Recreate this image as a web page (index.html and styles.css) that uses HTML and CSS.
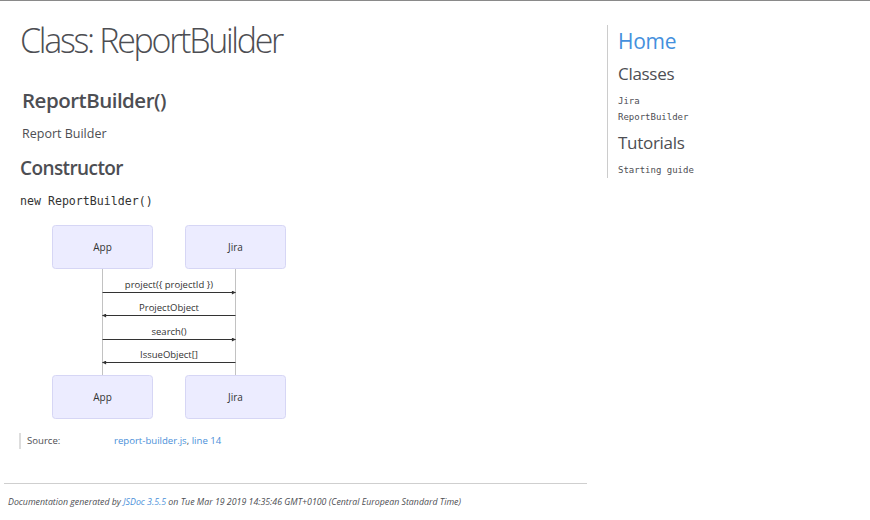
FILE: index.html
```html
<!DOCTYPE html>
<html lang="en">
<head>
<meta charset="utf-8">
<title>Class: ReportBuilder</title>
<link rel="stylesheet" href="styles.css">
</head>
<body>
<div class="page">
  <div class="main">
    <h1 class="page-title">Class: ReportBuilder</h1>
    <section class="doc">
      <h2 class="class-name">ReportBuilder()</h2>
      <p class="class-desc">Report Builder</p>
      <h3 class="subsection-title">Constructor</h3>
      <div class="signature">new ReportBuilder()</div>
      <svg class="diagram" width="260" height="200" viewBox="40 222 260 200" xmlns="http://www.w3.org/2000/svg">
        <defs>
          <marker id="arrow" viewBox="0 0 10 10" refX="9" refY="5" markerWidth="7" markerHeight="4" orient="auto" markerUnits="userSpaceOnUse">
            <path d="M0,0 L10,5 L0,10 z" fill="#333"/>
          </marker>
        </defs>
        <line x1="102.5" y1="268" x2="102.5" y2="376" stroke="#999" stroke-width="0.6"/>
        <line x1="235.5" y1="268" x2="235.5" y2="376" stroke="#999" stroke-width="0.6"/>
        <rect x="52.5" y="225.5" width="100" height="43" rx="3" fill="#ECECFF" stroke="#D6D6F5" stroke-width="1"/>
        <rect x="185.5" y="225.5" width="100" height="43" rx="3" fill="#ECECFF" stroke="#D6D6F5" stroke-width="1"/>
        <rect x="52.5" y="375.5" width="100" height="43" rx="3" fill="#ECECFF" stroke="#D6D6F5" stroke-width="1"/>
        <rect x="185.5" y="375.5" width="100" height="43" rx="3" fill="#ECECFF" stroke="#D6D6F5" stroke-width="1"/>
        <text class="actor" x="102.5" y="251" text-anchor="middle">App</text>
        <text class="actor" x="235.5" y="251" text-anchor="middle">Jira</text>
        <text class="actor" x="102.5" y="401" text-anchor="middle">App</text>
        <text class="actor" x="235.5" y="401" text-anchor="middle">Jira</text>
        <text class="msg" x="169" y="288" text-anchor="middle">project({ projectId })</text>
        <line x1="102.5" y1="292.5" x2="235.5" y2="292.5" stroke="#333" stroke-width="1" marker-end="url(#arrow)"/>
        <text class="msg" x="169" y="311" text-anchor="middle">ProjectObject</text>
        <line x1="235.5" y1="315.5" x2="102.5" y2="315.5" stroke="#333" stroke-width="1" marker-end="url(#arrow)"/>
        <text class="msg" x="169" y="335" text-anchor="middle">search()</text>
        <line x1="102.5" y1="339.5" x2="235.5" y2="339.5" stroke="#333" stroke-width="1" marker-end="url(#arrow)"/>
        <text class="msg" x="169" y="358" text-anchor="middle">IssueObject[]</text>
        <line x1="235.5" y1="362.5" x2="102.5" y2="362.5" stroke="#333" stroke-width="1" marker-end="url(#arrow)"/>
      </svg>
      <dl class="details">
        <dt class="tag-source">Source:</dt>
        <dd class="tag-source"><a href="#">report-builder.js</a>, <a href="#">line 14</a></dd>
      </dl>
    </section>
    <footer class="footer">
      Documentation generated by <a href="#">JSDoc 3.5.5</a> on Tue Mar 19 2019 14:35:46 GMT+0100 (Central European Standard Time)
    </footer>
  </div>
  <nav class="nav">
    <h2 class="nav-home"><a href="#">Home</a></h2>
    <h3 class="nav-title">Classes</h3>
    <ul class="nav-list">
      <li><a href="#">Jira</a></li>
      <li><a href="#">ReportBuilder</a></li>
    </ul>
    <h3 class="nav-title">Tutorials</h3>
    <ul class="nav-list">
      <li><a href="#">Starting guide</a></li>
    </ul>
  </nav>
</div>
</body>
</html>
```

FILE: styles.css
```css
html, body {
  margin: 0;
  padding: 0;
  background: #fff;
}
body {
  border-top: 1px solid #8a8a8a;
  font-family: "Open Sans", "Liberation Sans", sans-serif;
  color: #4d4e53;
  font-size: 12px;
  line-height: 1.5;
}
a { color: #4a90d9; text-decoration: none; }

.page {
  display: flex;
  align-items: flex-start;
}
.main {
  width: 607px;
  flex: none;
}
.page-title {
  font-size: 34px;
  font-weight: 300;
  letter-spacing: -2.3px;
  line-height: 40px;
  margin: 19px 0 0 20px;
  color: #4d4e53;
}
.doc {
  margin: 0 20px 0 4px;
  padding: 0 0 34px 0;
  border-bottom: 1px solid #cfcfcf;
}
.class-name {
  font-size: 20.5px;
  font-weight: 600;
  letter-spacing: -0.5px;
  line-height: 28px;
  margin: 26px 0 0 18px;
}
.class-desc {
  font-size: 12.5px;
  line-height: 18px;
  margin: 11px 0 0 18px;
}
.subsection-title {
  font-size: 19px;
  font-weight: 600;
  letter-spacing: -0.6px;
  line-height: 26px;
  margin: 12px 0 0 16px;
}
.signature {
  font-family: "DejaVu Sans Mono", monospace;
  font-size: 11.6px;
  line-height: 16px;
  margin: 12px 0 0 16px;
  color: #333;
}
.diagram {
  display: block;
  margin: 13px 0 0 36px;
}
.actor {
  font-family: "Open Sans", sans-serif;
  font-size: 10px;
  fill: #333;
}
.msg {
  font-family: "Open Sans", sans-serif;
  font-size: 9.5px;
  fill: #333;
}
.details {
  display: flex;
  margin: 11px 0 0 15px;
  border-left: 2px solid #ddd;
  font-size: 9.6px;
  line-height: 16px;
}
.details dt {
  width: 87px;
  padding-left: 6px;
  margin: 0;
}
.details dd {
  margin: 0;
}
.footer {
  display: block;
  padding: 11px 8px;
  font-style: italic;
  font-size: 8.8px;
  line-height: 14px;
  color: #4d4e53;
}
.nav {
  flex: none;
  margin-top: 24px;
  border-left: 1px solid #ccc;
  padding: 2px 0 0 10px;
  width: 200px;
}
.nav-home {
  margin: 0;
  font-size: 21px;
  font-weight: 400;
  line-height: 28px;
  letter-spacing: -0.3px;
}
.nav-home a { color: #4490dd; }
.nav-title {
  margin: 8px 0 0;
  font-size: 17px;
  font-weight: 400;
  line-height: 22px;
  letter-spacing: -0.3px;
}
.nav-list {
  list-style: none;
  padding: 0;
  margin: 8px 0 0;
  font-family: "DejaVu Sans Mono", monospace;
  font-size: 9px;
  line-height: 16px;
}
.nav-list + .nav-title { margin-top: 7px; }
.nav-list a { color: #4d4e53; }
```
